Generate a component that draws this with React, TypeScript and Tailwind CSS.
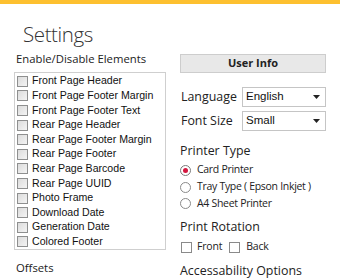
import React from "react";

const items = [
  "Front Page Header",
  "Front Page Footer Margin",
  "Front Page Footer Text",
  "Rear Page Header",
  "Rear Page Footer Margin",
  "Rear Page Footer",
  "Rear Page Barcode",
  "Rear Page UUID",
  "Photo Frame",
  "Download Date",
  "Generation Date",
  "Colored Footer",
];

function ClassicCheck() {
  return (
    <span className="w-[11px] h-[11px] border border-[#8e8f8f] bg-gradient-to-br from-[#dcdcdc] to-[#f4f4f4] shrink-0" />
  );
}

function Caret() {
  return (
    <svg width="7" height="4" viewBox="0 0 7 4" className="shrink-0">
      <path d="M0 0 H7 L3.5 4 Z" fill="#222" />
    </svg>
  );
}

function Select({ value }: { value: string }) {
  return (
    <div className="w-[84px] h-[20px] border border-[#c5c5c5] bg-white flex items-center justify-between pl-[3px] pr-[5px] text-[11.5px] text-[#111] [font-family:'Liberation_Sans',Arial,sans-serif]">
      <span>{value}</span>
      <Caret />
    </div>
  );
}

function Radio({ checked, label }: { checked?: boolean; label: string }) {
  return (
    <div className="flex items-center h-[16.7px]">
      <span
        className={
          "w-[11px] h-[11px] rounded-full border flex items-center justify-center bg-white " +
          (checked ? "border-[#7a7a7a]" : "border-[#8a8a8a]")
        }
      >
        {checked && <span className="w-[5px] h-[5px] rounded-full bg-[#d4173f]" />}
      </span>
      <span className="ml-[6px] text-[10.5px] tracking-[-0.3px] text-[#222]">{label}</span>
    </div>
  );
}

export default function App() {
  return (
    <div className="w-[340px] h-[280px] bg-white overflow-hidden [font-family:'Open_Sans','Noto_Sans',sans-serif] text-[#222]">
      <div className="h-[4px] bg-[#fdc02f]" />
      <div className="flex">
        <div className="w-[180px] flex flex-col pl-[14px]">
          <div className="pl-[9px] pt-[16px] text-[20.5px] tracking-[-0.4px] font-light leading-[28px] text-[#333]">Settings</div>
          <div className="pl-[2px] mt-[3px] text-[11.3px] leading-[16px]">Enable/Disable Elements</div>
          <div className="mt-[5px] w-[152px] h-[178px] border border-[#cfcfcf] pt-[1px] flex flex-col [font-family:'Liberation_Sans',Arial,sans-serif] text-[10.6px] text-[#111]">
            {items.map((t) => (
              <div key={t} className="flex items-center h-[14.6px] pl-[2px]">
                <ClassicCheck />
                <span className="ml-[4px] whitespace-nowrap">{t}</span>
              </div>
            ))}
          </div>
          <div className="pl-[2px] mt-[10px] text-[11.3px] leading-[16px]">Offsets</div>
        </div>
        <div className="flex flex-col pt-[50px]">
          <div className="w-[146px] h-[19px] bg-[#e8e8e8] border border-[#cdcdcd] flex items-center justify-center text-[11px] font-bold text-[#222]">
            User Info
          </div>
          <div className="flex items-center mt-[14px] h-[20px]">
            <span className="w-[62px] pl-[1px] text-[12.4px]">Language</span>
            <Select value="English" />
          </div>
          <div className="flex items-center mt-[4px] h-[20px]">
            <span className="w-[62px] pl-[1px] text-[12.4px]">Font Size</span>
            <Select value="Small" />
          </div>
          <div className="mt-[12px] text-[12.4px] leading-[16px]">Printer Type</div>
          <div className="mt-[3px] pl-[0px]">
            <Radio checked label="Card Printer" />
            <Radio label="Tray Type ( Epson Inkjet )" />
            <Radio label="A4 Sheet Printer" />
          </div>
          <div className="mt-[7px] text-[12.4px] leading-[16px]">Print Rotation</div>
          <div className="flex items-center mt-[4px] h-[16px]">
            <span className="w-[11px] h-[11px] border border-[#8a8a8a] ml-[1px]" />
            <span className="ml-[5px] text-[10.5px] tracking-[-0.2px]">Front</span>
            <span className="w-[11px] h-[11px] border border-[#8a8a8a] ml-[7px]" />
            <span className="ml-[6px] text-[10.5px] tracking-[-0.2px]">Back</span>
          </div>
          <div className="mt-[8px] text-[12.4px] leading-[16px]">Accessability Options</div>
        </div>
      </div>
    </div>
  );
}
